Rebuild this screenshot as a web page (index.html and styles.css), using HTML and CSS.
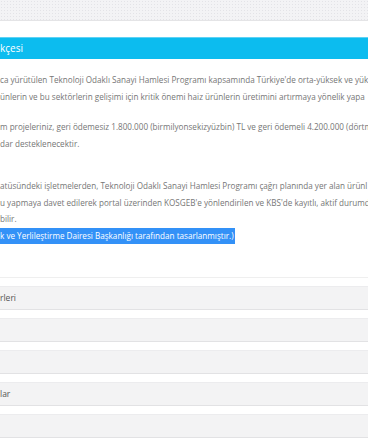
FILE: index.html
```html
<!DOCTYPE html>
<html lang="tr">
<head>
  <meta charset="UTF-8">
  <meta name="viewport" content="width=device-width, initial-scale=1.0">
  <title>Teknoloji Odaklı Sanayi Hamlesi</title>
  <link rel="stylesheet" href="styles.css">
</head>
<body>
  <div class="top-box"></div>

  <div class="section-title">kçesi</div>

  <div class="content">
    <p>
      <span class="line">ca yürütülen Teknoloji Odaklı Sanayi Hamlesi Programı kapsamında Türkiye'de orta-yüksek ve yük</span>
      <span class="line">ünlerin ve bu sektörlerin gelişimi için kritik önemi haiz ürünlerin üretimini artırmaya yönelik yapa</span>
    </p>
    <p>
      <span class="line">m projeleriniz, geri ödemesiz 1.800.000 (birmilyonsekizyüzbin) TL ve geri ödemeli 4.200.000 (dörtm</span>
      <span class="line">dar desteklenecektir.</span>
    </p>
    <p class="wide-gap">
      <span class="line">atüsündeki işletmelerden, Teknoloji Odaklı Sanayi Hamlesi Programı çağrı planında yer alan ürünl</span>
      <span class="line">u yapmaya davet edilerek portal üzerinden KOSGEB'e yönlendirilen ve KBS'de kayıtlı, aktif durumd</span>
      <span class="line">bilir.</span>
      <span class="line"><span class="selected">k ve Yerlileştirme Dairesi Başkanlığı tarafından tasarlanmıştır.)</span></span>
    </p>
  </div>

  <div class="accordion">
    <div class="panel">rleri</div>
    <div class="panel"></div>
    <div class="panel"></div>
    <div class="panel">lar</div>
    <div class="panel"></div>
  </div>
</body>
</html>
```

FILE: styles.css
```css
body {
  margin: 0;
  font-family: 'Open Sans', 'Noto Sans', sans-serif;
  background: #fff;
  overflow: hidden;
}

.top-box {
  height: 20px;
  background-color: #f3f3f5;
  background-image: radial-gradient(#e3e3e7 0.6px, transparent 0.8px);
  background-size: 3px 3px;
  border-bottom: 1px solid #e4e4e6;
}

.section-title {
  margin-top: 16px;
  height: 21px;
  line-height: 21px;
  background: #0cbcef;
  border-top: 1px solid #5fd2f4;
  color: #fff;
  font-size: 10px;
}

.content {
  margin-top: 13px;
  color: #767676;
  font-size: 8.15px;
  line-height: 16.5px;
}

.content p {
  margin: 0 0 14px;
}

.content p.wide-gap {
  margin-top: 26px;
}

.line {
  display: block;
  white-space: nowrap;
  overflow: hidden;
}

.selected {
  background: #3391f7;
  color: #fff;
  padding: 2px 1px 3px 0;
}

.accordion {
  margin-top: 33px;
  border-top: 1px solid #efefef;
  padding-top: 8px;
}

.panel {
  height: 22px;
  line-height: 22px;
  margin-bottom: 8px;
  background: #f3f3f4;
  border-top: 1px solid #ececee;
  border-bottom: 1px solid #e2e2e4;
  color: #555;
  font-size: 8.5px;
}
```
